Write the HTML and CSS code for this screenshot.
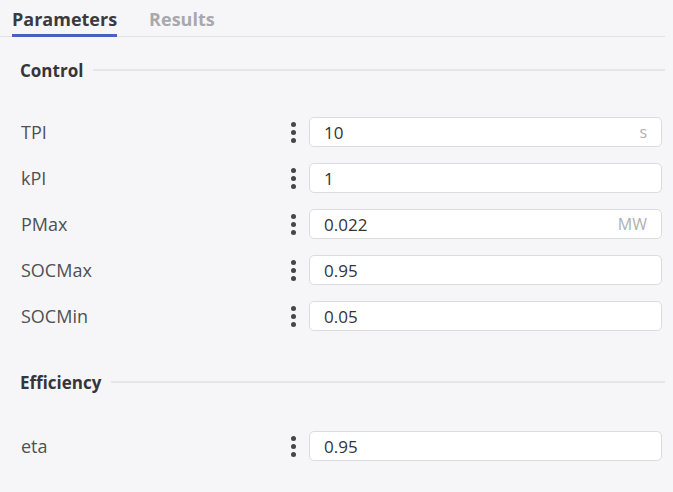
FILE: index.html
```html
<!DOCTYPE html>
<html lang="en">
<head>
  <meta charset="UTF-8" />
  <meta name="viewport" content="width=device-width, initial-scale=1.0"/>
  <title>Block parameters</title>
  <link rel="stylesheet" href="styles.css">
</head>
<body>
  <div class="panel">
    <div class="tabs">
      <button class="tab active">Parameters</button>
      <button class="tab">Results</button>
    </div>

    <!-- Control group -->
    <div class="group">
      <div class="group-title"><span>Control</span></div>
      <div class="rows">
        <div class="row">
          <label>TPI</label>
          <span class="kebab"><i></i><i></i><i></i></span>
          <div class="field"><span class="value">10</span><span class="unit">s</span></div>
        </div>
        <div class="row">
          <label>kPI</label>
          <span class="kebab"><i></i><i></i><i></i></span>
          <div class="field"><span class="value">1</span></div>
        </div>
        <div class="row">
          <label>PMax</label>
          <span class="kebab"><i></i><i></i><i></i></span>
          <div class="field"><span class="value">0.022</span><span class="unit">MW</span></div>
        </div>
        <div class="row">
          <label>SOCMax</label>
          <span class="kebab"><i></i><i></i><i></i></span>
          <div class="field"><span class="value">0.95</span></div>
        </div>
        <div class="row">
          <label>SOCMin</label>
          <span class="kebab"><i></i><i></i><i></i></span>
          <div class="field"><span class="value">0.05</span></div>
        </div>
      </div>
    </div>

    <!-- Efficiency group -->
    <div class="group">
      <div class="group-title"><span>Efficiency</span></div>
      <div class="rows">
        <div class="row">
          <label>eta</label>
          <span class="kebab"><i></i><i></i><i></i></span>
          <div class="field"><span class="value">0.95</span></div>
        </div>
      </div>
    </div>
  </div>
</body>
</html>
```

FILE: styles.css
```css
* {
  margin: 0;
  padding: 0;
  box-sizing: border-box;
  font-family: 'Open Sans', 'Noto Sans', sans-serif;
}

body {
  background: #f6f6f8;
  overflow: hidden;
}

.panel {
  width: 665px;
}

.tabs {
  display: flex;
  gap: 32px;
  padding-left: 12px;
  border-bottom: 1px solid #e2e2e6;
  height: 37px;
}

.tab {
  background: none;
  border: none;
  font-size: 18px;
  font-weight: 700;
  color: #a8a8ad;
  height: 37px;
  padding-top: 3px;
  border-bottom: 3px solid transparent;
  margin-bottom: -1px;
}

.tab.active {
  color: #3a3a40;
  border-bottom-color: #4a5ec4;
}

.group {
  padding: 0 3px 0 20px;
}

.group-title {
  display: flex;
  align-items: center;
  gap: 10px;
  height: 36px;
  margin-top: 15px;
  font-size: 17px;
  font-weight: 700;
  color: #35353a;
}

.group-title::after {
  content: '';
  flex: 1;
  height: 2px;
  background: #e6e6e9;
  margin-right: -3px;
}

.rows {
  display: flex;
  flex-direction: column;
  gap: 16px;
  padding: 29px 0 18px;
}

.group + .group .rows {
  padding-top: 31px;
}

.row {
  display: flex;
  align-items: center;
  height: 30px;
}

.row label {
  flex: 1;
  font-size: 18px;
  color: #505055;
  padding-left: 1px;
}

.kebab {
  width: 12px;
  margin-right: 10px;
  display: flex;
  flex-direction: column;
  align-items: center;
  gap: 3px;
}

.kebab i {
  width: 5px;
  height: 5px;
  border-radius: 50%;
  background: #45454a;
}

.field {
  width: 353px;
  height: 30px;
  display: flex;
  align-items: center;
  justify-content: space-between;
  padding: 0 14px 0 14px;
  background: #fff;
  border: 1px solid #dcdce0;
  border-radius: 5px;
}

.value {
  font-size: 17px;
  color: #333338;
}

.unit {
  font-size: 16px;
  color: #b0b0b5;
}
```
